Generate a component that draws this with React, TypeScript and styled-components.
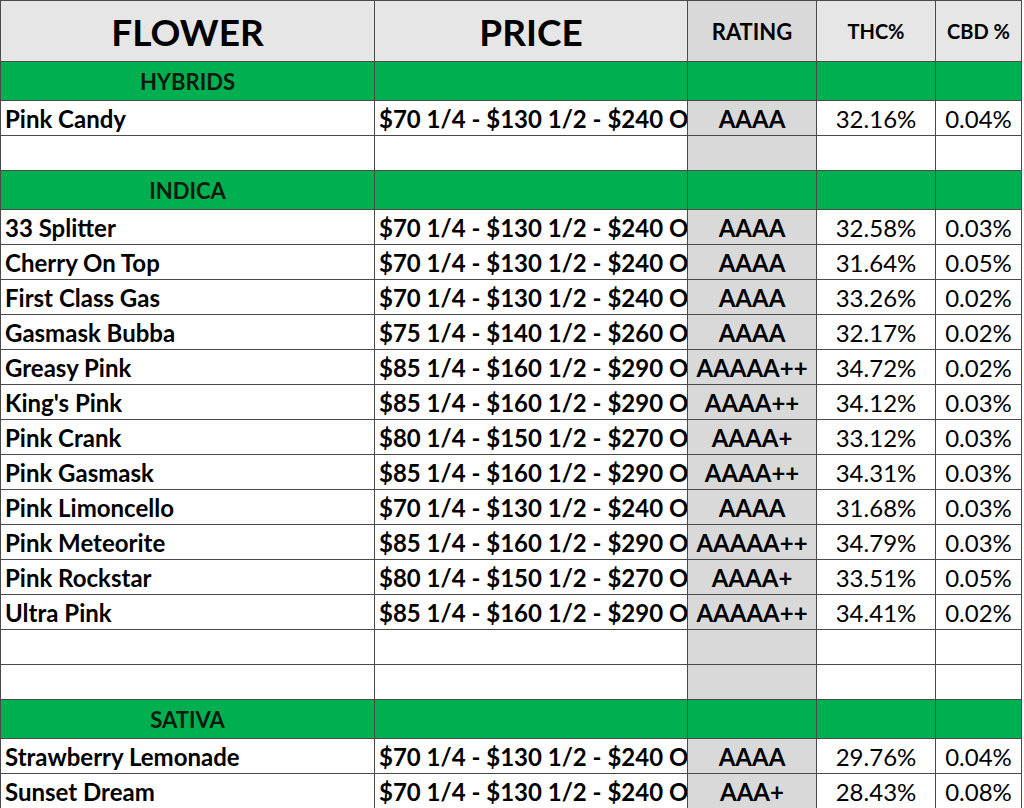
import React from "react";
import styled, { createGlobalStyle } from "styled-components";

type Strain = {
  name: string;
  price: string;
  rating: string;
  thc: string;
  cbd: string;
};

type Row =
  | { kind: "section"; title: string }
  | { kind: "blank" }
  | ({ kind: "strain" } & Strain);

const P70 = "$70 1/4 - $130 1/2 - $240 Oz";
const P75 = "$75 1/4 - $140 1/2 - $260 Oz";
const P80 = "$80 1/4 - $150 1/2 - $270 Oz";
const P85 = "$85 1/4 - $160 1/2 - $290 Oz";

const s = (name: string, price: string, rating: string, thc: string, cbd: string): Row => ({
  kind: "strain",
  name,
  price,
  rating,
  thc,
  cbd,
});

const rows: Row[] = [
  { kind: "section", title: "HYBRIDS" },
  s("Pink Candy", P70, "AAAA", "32.16%", "0.04%"),
  { kind: "blank" },
  { kind: "section", title: "INDICA" },
  s("33 Splitter", P70, "AAAA", "32.58%", "0.03%"),
  s("Cherry On Top", P70, "AAAA", "31.64%", "0.05%"),
  s("First Class Gas", P70, "AAAA", "33.26%", "0.02%"),
  s("Gasmask Bubba", P75, "AAAA", "32.17%", "0.02%"),
  s("Greasy Pink", P85, "AAAAA++", "34.72%", "0.02%"),
  s("King's Pink", P85, "AAAA++", "34.12%", "0.03%"),
  s("Pink Crank", P80, "AAAA+", "33.12%", "0.03%"),
  s("Pink Gasmask", P85, "AAAA++", "34.31%", "0.03%"),
  s("Pink Limoncello", P70, "AAAA", "31.68%", "0.03%"),
  s("Pink Meteorite", P85, "AAAAA++", "34.79%", "0.03%"),
  s("Pink Rockstar", P80, "AAAA+", "33.51%", "0.05%"),
  s("Ultra Pink", P85, "AAAAA++", "34.41%", "0.02%"),
  { kind: "blank" },
  { kind: "blank" },
  { kind: "section", title: "SATIVA" },
  s("Strawberry Lemonade", P70, "AAAA", "29.76%", "0.04%"),
  s("Sunset Dream", P70, "AAA+", "28.43%", "0.08%"),
];

const GlobalStyle = createGlobalStyle`
  body {
    margin: 0;
    background: #ffffff;
    overflow: hidden;
  }
`;

const Sheet = styled.table`
  border-collapse: collapse;
  table-layout: fixed;
  width: 1021px;
  font-family: Lato, "Open Sans", sans-serif;
  color: #000;

  td,
  th {
    border: 1px solid #4a4a4a;
    padding: 0;
    overflow: hidden;
    white-space: nowrap;
  }
`;

const HeadCell = styled.th<{ $size: number; $shade?: boolean }>`
  height: 60px;
  background: ${(p) => (p.$shade ? "#d9d9d9" : "#e7e6e6")};
  font-size: ${(p) => p.$size}px;
  font-weight: 700;
  text-align: center;
`;

const SectionRow = styled.tr`
  td {
    height: 38px;
    background: #00b050;
  }
`;

const SectionTitle = styled.td`
  font-size: 22px;
  font-weight: 700;
  text-align: center;
  color: #0d1a10;
`;

const DataRow = styled.tr`
  td {
    height: 34px;
  }
`;

const Cell = styled.td<{ $align?: "left" | "center"; $bold?: boolean; $shade?: boolean }>`
  font-size: 24px;
  font-weight: ${(p) => (p.$bold ? 700 : 400)};
  text-align: ${(p) => p.$align ?? "center"};
  padding-left: ${(p) => (p.$align === "left" ? "4px" : "0")} !important;
  background: ${(p) => (p.$shade ? "#d9d9d9" : "#ffffff")};
  vertical-align: middle;
`;

const App: React.FC = () => {
  return (
    <>
      <GlobalStyle />
      <Sheet>
        <colgroup>
          <col style={{ width: 374 }} />
          <col style={{ width: 313 }} />
          <col style={{ width: 129 }} />
          <col style={{ width: 119 }} />
          <col style={{ width: 86 }} />
        </colgroup>
        <thead>
          <tr>
            <HeadCell $size={37}>FLOWER</HeadCell>
            <HeadCell $size={37}>PRICE</HeadCell>
            <HeadCell $size={22} $shade>
              RATING
            </HeadCell>
            <HeadCell $size={20}>THC%</HeadCell>
            <HeadCell $size={20}>CBD %</HeadCell>
          </tr>
        </thead>
        <tbody>
          {rows.map((row, i) => {
            if (row.kind === "section") {
              return (
                <SectionRow key={i}>
                  <SectionTitle>{row.title}</SectionTitle>
                  <td />
                  <td />
                  <td />
                  <td />
                </SectionRow>
              );
            }
            if (row.kind === "blank") {
              return (
                <DataRow key={i}>
                  <Cell />
                  <Cell />
                  <Cell $shade />
                  <Cell />
                  <Cell />
                </DataRow>
              );
            }
            return (
              <DataRow key={i}>
                <Cell $align="left" $bold>
                  {row.name}
                </Cell>
                <Cell $align="left" $bold>
                  {row.price}
                </Cell>
                <Cell $bold $shade>
                  {row.rating}
                </Cell>
                <Cell>{row.thc}</Cell>
                <Cell>{row.cbd}</Cell>
              </DataRow>
            );
          })}
        </tbody>
      </Sheet>
    </>
  );
};

export default App;
